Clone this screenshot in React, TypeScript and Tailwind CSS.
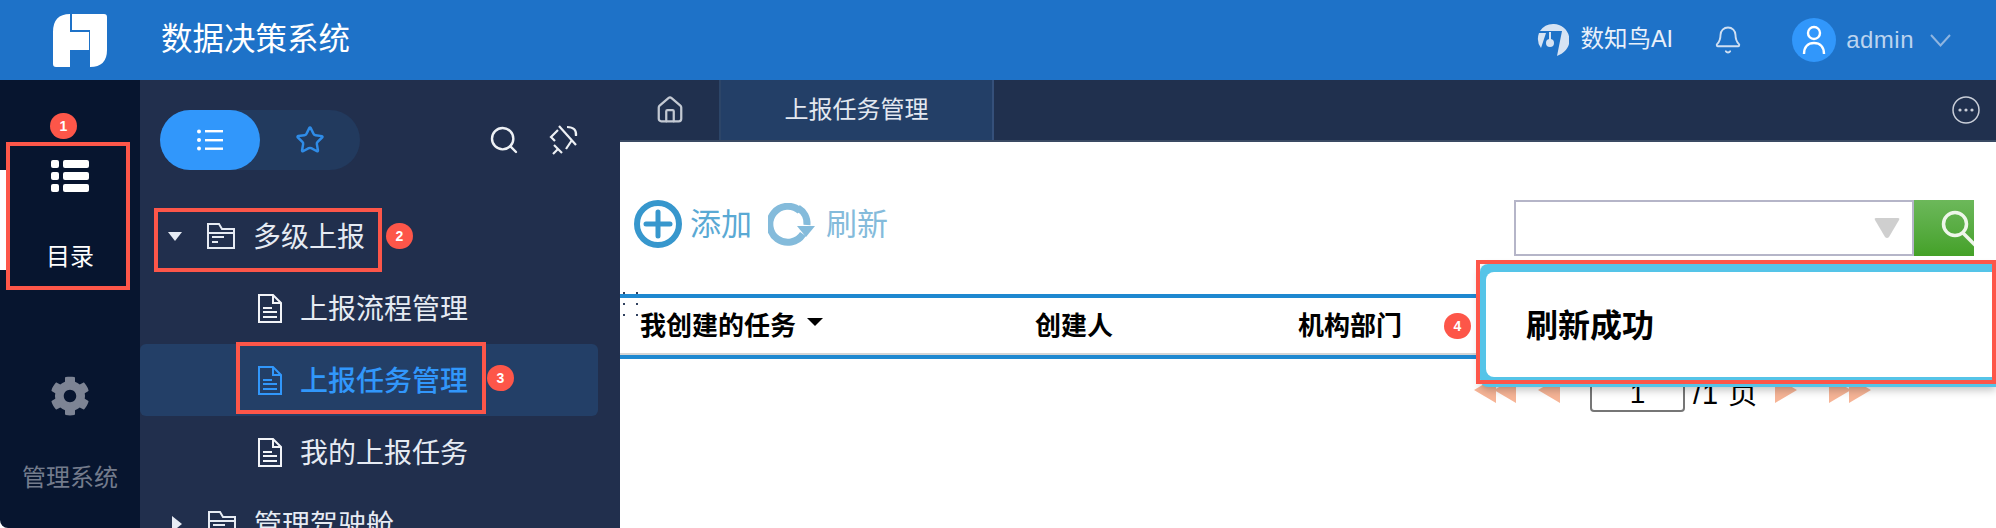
import { Bell, Home, Search, Star } from 'lucide-react';
import { FaCog } from 'react-icons/fa';

const FONT = "font-['Liberation_Sans','Noto_Sans_CJK_SC',sans-serif]";

function Logo() {
    return (
        <svg width="54" height="53" viewBox="0 0 54 53" fill="#fff">
            <path d="M0 18Q0 0 17 0V18H36V36H17V53H3Q0 53 0 50Z" />
            <path d="M19 0H51Q54 0 54 3V36Q54 53 37 53V16H19Z" />
        </svg>
    );
}

function AiIcon() {
    return (
        <svg width="32" height="32" viewBox="0 0 32 32">
            <path d="M16 0A16 16 0 0 1 22 31L20 32L25 7H3A16 16 0 0 1 16 0Z" fill="#d6e3f3" />
            <path d="M2 9H9L4 24A16 16 0 0 1 2 9Z" fill="#d6e3f3" />
            <rect x="12" y="8" width="2" height="10" fill="#d6e3f3" />
            <circle cx="13" cy="19" r="4" fill="#d6e3f3" />
        </svg>
    );
}

function ListIcon() {
    return (
        <svg width="38" height="32" viewBox="0 0 38 32" fill="#fff">
            <rect x="0" y="0" width="8" height="8" rx="2" />
            <rect x="12" y="0" width="26" height="8" rx="2" />
            <rect x="0" y="12" width="8" height="8" rx="2" />
            <rect x="12" y="12" width="26" height="8" rx="2" />
            <rect x="0" y="24" width="8" height="8" rx="2" />
            <rect x="12" y="24" width="26" height="8" rx="2" />
        </svg>
    );
}

function FolderIcon() {
    return (
        <svg width="28" height="26" viewBox="0 0 28 26" fill="none" stroke="#e6ebf3" strokeWidth="2">
            <path d="M1 25V1H12L15 6H27V25Z" />
            <path d="M1 10H27" />
            <path d="M5 14H17M5 19H11" />
        </svg>
    );
}

function DocIcon({ color }: { color: string }) {
    return (
        <svg width="24" height="29" viewBox="0 0 24 29" fill="none" stroke={color} strokeWidth="2">
            <path d="M1 1H15L23 9V28H1Z" />
            <path d="M15 1V9H23" />
            <path d="M5 14H14M5 18H19M5 23H19" />
        </svg>
    );
}

function TreeRow({ label, icon, indent, active, arrow }: { label: string; icon: React.ReactNode; indent: string; active?: boolean; arrow?: React.ReactNode }) {
    return (
        <div className={`flex h-[72px] w-[458px] items-center rounded-md ${indent} ${active ? 'bg-[#233f67]' : ''}`}>
            {arrow}
            {icon}
            <span className={`ml-[18px] whitespace-nowrap pt-[4px] text-[28px] leading-none ${active ? 'font-medium text-[#3197fb]' : 'text-[#e6ebf3]'}`}>{label}</span>
        </div>
    );
}

function Badge({ n, className }: { n: number; className: string }) {
    return (
        <div className={`absolute flex h-[26px] w-[27px] items-center justify-center rounded-full bg-[#fd5649] text-[14px] font-bold text-white ${className}`}>{n}</div>
    );
}

function Triangles({ dir, double }: { dir: 'left' | 'right'; double?: boolean }) {
    const one = dir === 'left' ? 'M0 13L22 0V26Z' : 'M0 0L22 13L0 26Z';
    return (
        <svg width={double ? 42 : 22} height="26" viewBox={`0 0 ${double ? 42 : 22} 26`} fill="#f6b496" className="mt-[5px] shrink-0">
            <path d={one} />
            {double && <path d={one} transform="translate(20 0)" />}
        </svg>
    );
}

export default function App() {
    return (
        <div className={`relative h-[528px] w-[1996px] overflow-hidden bg-white ${FONT}`}>
            {/* Top bar */}
            <header className="flex h-20 items-center bg-[#1e72c8] pl-[53px] pr-[45px]">
                <Logo />
                <h1 className="ml-[54px] text-[31.5px] font-normal leading-none text-white">数据决策系统</h1>
                <div className="ml-auto flex items-center">
                    <AiIcon />
                    <span className="ml-[11px] text-[23.5px] leading-none text-[#e8f0fa]">数知鸟AI</span>
                    <Bell className="ml-[40px] h-[30px] w-[30px] text-[#cfdff2]" strokeWidth={1.5} />
                    <div className="ml-[49px] flex h-11 w-11 items-center justify-center rounded-full bg-[#3197fb]">
                        <svg width="24" height="30" viewBox="0 0 24 30" fill="none" stroke="#fff" strokeWidth="2.4">
                            <circle cx="12" cy="8" r="6" />
                            <path d="M2 29C2 22 6 18 12 18C18 18 22 22 22 29" />
                        </svg>
                    </div>
                    <span className="ml-[10px] text-[24px] leading-none tracking-[0.5px] text-[#bcd4ef]">admin</span>
                    <svg width="21" height="13" viewBox="0 0 21 13" fill="none" stroke="#8fb5e0" strokeWidth="2" className="ml-[16px]">
                        <path d="M1 1L10.5 11.5L20 1" />
                    </svg>
                </div>
            </header>

            <div className="flex h-[448px]">
                {/* Icon rail */}
                <aside className="flex w-[140px] shrink-0 flex-col items-center rounded-bl-lg bg-[#07152f] pt-[80px]">
                    <ListIcon />
                    <span className="mt-[53px] h-6 text-[24px] leading-6 text-white">目录</span>
                    <FaCog className="mt-[107px] h-10 w-10 shrink-0 text-[#7d8494]" />
                    <span className="mt-[50px] h-6 text-[24px] leading-6 text-[#737b8c]">管理系统</span>
                </aside>

                {/* Tree */}
                <nav className="w-[480px] shrink-0 overflow-hidden bg-[#212f4d]">
                    <div className="flex items-center pl-5 pt-[30px]">
                        <div className="flex h-[60px] w-[200px] rounded-full bg-[#223a5e]">
                            <div className="flex h-[60px] w-[100px] items-center justify-center rounded-full bg-[#3197fb]">
                                <svg width="26" height="22" viewBox="0 0 26 22" fill="#fff">
                                    <circle cx="2" cy="2.5" r="2" />
                                    <rect x="8" y="1" width="18" height="2.4" />
                                    <circle cx="2" cy="11" r="2" />
                                    <rect x="8" y="10" width="18" height="2.4" />
                                    <circle cx="2" cy="19.5" r="2" />
                                    <rect x="8" y="18.5" width="18" height="2.4" />
                                </svg>
                            </div>
                            <div className="flex w-[100px] items-center justify-center">
                                <Star className="h-[30px] w-[30px] text-[#2f8ce8]" strokeWidth={2} />
                            </div>
                        </div>
                        <Search className="ml-[128px] h-8 w-8 text-[#eef1f5]" strokeWidth={1.8} />
                        <svg width="30" height="30" viewBox="0 0 30 30" fill="none" stroke="#eef1f5" strokeWidth="2.2" className="ml-[29px]">
                            <path d="M10 1L27 20" />
                            <path d="M9 5L2 12L6 16" />
                            <path d="M5 20L13 28" />
                            <path d="M9 24L4 29" />
                            <path d="M23 15L17 24" />
                            <path d="M18 2Q28 2 27 11" />
                        </svg>
                    </div>
                    <div className="mt-[30px]">
                        <TreeRow
                            label="多级上报"
                            indent="pl-[28px]"
                            icon={<FolderIcon />}
                            arrow={<div className="mr-[25px] h-0 w-0 border-x-[7.5px] border-t-[9px] border-x-transparent border-t-[#e6ebf3]" />}
                        />
                        <TreeRow label="上报流程管理" indent="pl-[118px]" icon={<DocIcon color="#f2f4f8" />} />
                        <TreeRow label="上报任务管理" indent="pl-[118px]" icon={<DocIcon color="#3197fb" />} active />
                        <TreeRow label="我的上报任务" indent="pl-[118px]" icon={<DocIcon color="#f2f4f8" />} />
                        <TreeRow
                            label="管理驾驶舱"
                            indent="pl-[32px]"
                            icon={<FolderIcon />}
                            arrow={<div className="mr-[26px] h-0 w-0 border-y-[8px] border-l-[10px] border-y-transparent border-l-[#e6ebf3]" />}
                        />
                    </div>
                </nav>

                {/* Main area */}
                <main className="min-w-0 flex-1">
                    <div className="flex h-[62px] items-center border-b-2 border-[#3a4a63] bg-[#20304e]">
                        <div className="flex h-[60px] w-[101px] items-center justify-center border-r-2 border-[#2c4568]">
                            <Home className="h-[30px] w-[30px] text-[#c3c9d3]" strokeWidth={1.8} />
                        </div>
                        <div className="flex h-[60px] w-[273px] items-center justify-center border-r-2 border-[#35507a] bg-[#233f67] text-[24px] leading-none text-[#e3e8f0]">上报任务管理</div>
                        <svg width="28" height="28" viewBox="0 0 28 28" fill="none" className="ml-auto mr-4">
                            <circle cx="14" cy="14" r="13" stroke="#c9ced8" strokeWidth="1.5" />
                            <circle cx="8" cy="14" r="1.6" fill="#c9ced8" />
                            <circle cx="14" cy="14" r="1.6" fill="#c9ced8" />
                            <circle cx="20" cy="14" r="1.6" fill="#c9ced8" />
                        </svg>
                    </div>

                    {/* Toolbar */}
                    <div className="flex items-start pl-[14px] pr-[22px] pt-[58px]">
                        <div className="flex h-12 items-center">
                            <svg width="48" height="48" viewBox="0 0 48 48" fill="none" className="shrink-0 blur-[0.5px]">
                                <circle cx="24" cy="24" r="21" stroke="#3797cd" strokeWidth="6" />
                                <path d="M12 24H36M24 12V36" stroke="#3797cd" strokeWidth="5" strokeLinecap="round" />
                            </svg>
                            <span className="ml-2 text-[31px] leading-none text-[#5aa9d4]">添加</span>
                            <svg width="47" height="43" viewBox="0 0 47 43" fill="none" className="ml-4 shrink-0 blur-[0.7px]">
                                <path d="M35 31A18 18 0 1 1 32 8" stroke="#84bbdb" strokeWidth="7" />
                                <path d="M30 5A18 18 0 0 1 39 22" stroke="#84bbdb" strokeWidth="7" />
                                <path d="M29 23H47L38 34Z" fill="#84bbdb" />
                            </svg>
                            <span className="ml-[11px] text-[31px] leading-none text-[#84bbdb]">刷新</span>
                        </div>
                        <div className="ml-auto flex h-14 w-[400px] items-center justify-end border-2 border-[#b5b5c8] bg-white pr-3">
                            <svg width="26" height="22" viewBox="0 0 26 22">
                                <path d="M2 1H24Q26 1 25 3L15 20Q13 22 11 20L1 3Q0 1 2 1Z" fill="#cfcfcf" />
                            </svg>
                        </div>
                        <div className="h-14 w-[60px] overflow-hidden bg-gradient-to-b from-[#6cb85a] to-[#44a127]">
                            <svg width="60" height="56" viewBox="0 0 60 56" fill="none" stroke="#eef6ea" strokeWidth="3.5">
                                <circle cx="41" cy="24" r="11.5" />
                                <path d="M49 33L62 46" />
                            </svg>
                        </div>
                    </div>

                    {/* Table header */}
                    <div className="relative mt-[38px] flex h-[65px] items-center border-y-4 border-[#1e88d0] pb-[2px] pl-[20px] text-[26px] font-bold leading-none text-black shadow-[inset_0_-2px_0_#d5d5d5]">
                        <div className="absolute -top-[6px] left-[3px] grid grid-cols-2 gap-x-[11px] gap-y-[9px]">
                            {[0, 1, 2, 3, 4, 5].map(i => (
                                <div key={i} className="h-[2px] w-[2px] bg-[#30405e]" />
                            ))}
                        </div>
                        <div className="flex w-[395px] items-center">
                            我创建的任务
                            <div className="ml-[11px] h-0 w-0 -translate-y-[4px] border-x-[8px] border-t-[8px] border-x-transparent border-t-black" />
                        </div>
                        <div className="w-[263px]">创建人</div>
                        <div>机构部门</div>
                    </div>

                    {/* Pager */}
                    <div className="mt-[13px] flex pl-[854px] leading-none">
                        <Triangles dir="left" double />
                        <div className="ml-[22px]">
                            <Triangles dir="left" />
                        </div>
                        <div className="ml-[30px] flex h-10 w-[95px] shrink-0 items-center justify-center rounded-[4px] border-2 border-[#767676] pt-[4px] text-[28px] text-black">1</div>
                        <span className="ml-2 w-[64px] shrink-0 whitespace-nowrap pt-[8px] text-[29px] tracking-[1px] text-black">/1 页</span>
                        <div className="ml-[18px]">
                            <Triangles dir="right" />
                        </div>
                        <div className="ml-[32px]">
                            <Triangles dir="right" double />
                        </div>
                    </div>
                </main>
            </div>

            {/* Active marker on the rail */}
            <div className="absolute left-0 top-[170px] h-[100px] w-[6px] bg-white" />

            {/* Toast */}
            <div className="absolute left-[1480px] top-[264px] h-[123px] w-[516px] rounded-l-lg bg-[#55c4e8] pb-[10px] pl-[6px] pt-2 shadow-[0_3px_8px_rgba(0,0,0,0.25)]">
                <div className="flex h-[105px] items-center rounded-l-lg bg-white pl-[40px] pt-[2px] text-[32px] font-bold leading-none text-black">刷新成功</div>
            </div>

            {/* Annotations */}
            <div className="absolute left-[6px] top-[142px] h-[148px] w-[124px] border-4 border-[#fd5649]" />
            <div className="absolute left-[154px] top-[208px] h-[64px] w-[228px] border-4 border-[#fd5649]" />
            <div className="absolute left-[236px] top-[342px] h-[72px] w-[250px] border-4 border-[#fd5649]" />
            <div className="absolute left-[1476px] top-[260px] h-[124px] w-[520px] border-4 border-[#fd5649]" />
            <Badge n={1} className="left-[50px] top-[113px]" />
            <Badge n={2} className="left-[386px] top-[223px]" />
            <Badge n={3} className="left-[487px] top-[365px]" />
            <Badge n={4} className="left-[1444px] top-[313px]" />
        </div>
    );
}
